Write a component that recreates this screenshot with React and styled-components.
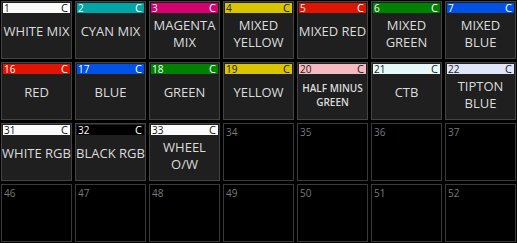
import React from "react";
import styled, { createGlobalStyle } from "styled-components";

const GlobalStyle = createGlobalStyle`
  html, body {
    margin: 0;
    padding: 0;
    background: #000;
  }
  body {
    font-family: "Open Sans", "Noto Sans", sans-serif;
  }
`;

const Grid = styled.div`
  display: grid;
  grid-template-columns: repeat(7, 71px);
  grid-auto-rows: 58px;
  gap: 3px;
  padding: 1px;
  width: 517px;
  height: 243px;
  box-sizing: border-box;
  background: #000;
`;

const Tile = styled.div`
  display: flex;
  flex-direction: column;
  box-sizing: border-box;
  border: 1px solid ${(p) => (p.$empty ? "#3a3a3a" : "#444")};
  background: ${(p) => (p.$empty ? "#000" : "#1f1f1f")};
  padding: 1px;
  overflow: hidden;
`;

const Header = styled.div`
  display: flex;
  justify-content: space-between;
  align-items: center;
  height: 10px;
  padding: 0 2px 0 1px;
  background: ${(p) => p.$bg};
  color: ${(p) => p.$fg};
  font-size: 10px;
  line-height: 10px;
`;

const Num = styled.span`
  font-size: 10px;
`;

const Mark = styled.span`
  font-size: 11px;
`;

const EmptyNum = styled.div`
  color: #7a7a7a;
  font-size: 10px;
  line-height: 12px;
  padding: 1px 0 0 1px;
`;

const Label = styled.div`
  flex: 1;
  display: flex;
  flex-direction: column;
  align-items: center;
  justify-content: center;
  text-align: center;
  padding: 0 0 ${(p) => (p.$lines > 1 ? "2px" : "8px")};
  color: #dcdcdc;
  font-size: ${(p) => (p.$small ? "10px" : "13px")};
  font-weight: ${(p) => (p.$small ? 600 : 400)};
  line-height: ${(p) => (p.$small ? "14px" : "17px")};
  white-space: nowrap;
`;

const WHITE = ["#fbfbfb", "#111"];
const RED = ["#e01400", "#fff"];
const BLUE = ["#0052e6", "#fff"];
const GREEN = ["#008200", "#fff"];
const YELLOW = ["#d9c400", "#222"];

const presets = [
  { n: 1, c: WHITE, label: ["WHITE MIX"] },
  { n: 2, c: ["#00a5a5", "#fff"], label: ["CYAN MIX"] },
  { n: 3, c: ["#d6006e", "#fff"], label: ["MAGENTA", "MIX"] },
  { n: 4, c: YELLOW, label: ["MIXED", "YELLOW"] },
  { n: 5, c: RED, label: ["MIXED RED"] },
  { n: 6, c: GREEN, label: ["MIXED", "GREEN"] },
  { n: 7, c: BLUE, label: ["MIXED", "BLUE"] },
  { n: 16, c: RED, label: ["RED"] },
  { n: 17, c: BLUE, label: ["BLUE"] },
  { n: 18, c: GREEN, label: ["GREEN"] },
  { n: 19, c: YELLOW, label: ["YELLOW"] },
  { n: 20, c: ["#f5b9c0", "#222"], label: ["HALF MINUS", "GREEN"], small: true },
  { n: 21, c: ["#e6f8f8", "#222"], label: ["CTB"] },
  { n: 22, c: ["#e1e5f8", "#222"], label: ["TIPTON", "BLUE"] },
  { n: 31, c: WHITE, label: ["WHITE RGB"] },
  { n: 32, c: ["#000", "#fff"], label: ["BLACK RGB"] },
  { n: 33, c: WHITE, label: ["WHEEL", "O/W"] },
  { n: 34 }, { n: 35 }, { n: 36 }, { n: 37 },
  { n: 46 }, { n: 47 }, { n: 48 }, { n: 49 }, { n: 50 }, { n: 51 }, { n: 52 },
];

const App = () => {
  return (
    <>
      <GlobalStyle />
      <Grid>
        {presets.map((p) =>
          p.label ? (
            <Tile key={p.n}>
              <Header $bg={p.c[0]} $fg={p.c[1]}>
                <Num>{p.n}</Num>
                <Mark>C</Mark>
              </Header>
              <Label $small={p.small} $lines={p.label.length}>
                {p.label.map((line) => (
                  <span key={line}>{line}</span>
                ))}
              </Label>
            </Tile>
          ) : (
            <Tile key={p.n} $empty>
              <EmptyNum>{p.n}</EmptyNum>
            </Tile>
          )
        )}
      </Grid>
    </>
  );
};

export default App;
